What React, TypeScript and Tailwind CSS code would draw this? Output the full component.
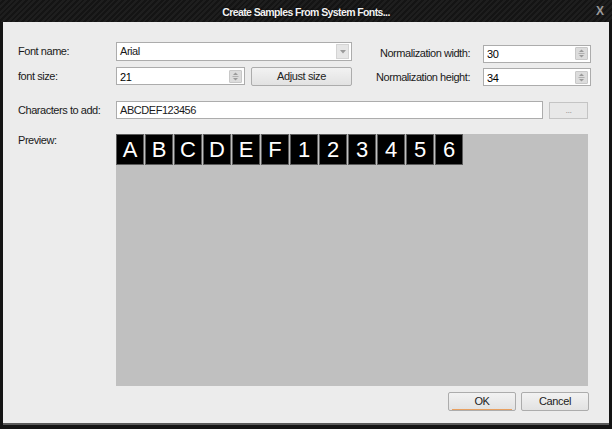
import React from 'react';

const chars = ['A', 'B', 'C', 'D', 'E', 'F', '1', '2', '3', '4', '5', '6'];

function Spin() {
  return (
    <span className="flex h-[13px] w-[13px] flex-col items-center justify-center gap-px rounded-[1px] border border-[#c8c8c8] bg-[#dcdcdc]">
      <svg width="7" height="9" viewBox="0 0 7 9">
        <path d="M3.5 0.5 L6 3 L1 3 Z" fill="#9a9a9a" />
        <rect x="0.5" y="4" width="6" height="1" fill="#b0b0b0" />
        <path d="M1 6 L6 6 L3.5 8.5 Z" fill="#9a9a9a" />
      </svg>
    </span>
  );
}

function SpinBox({ value, w }: { value: string; w: string }) {
  return (
    <div className={`flex h-[18px] items-center justify-between border border-[#acacac] bg-white pl-[3px] pr-[2px] ${w}`}>
      <span className="pt-[2px] text-[11px] leading-none text-black">{value}</span>
      <Spin />
    </div>
  );
}

function Btn({ label, w, focus }: { label: string; w: string; focus?: boolean }) {
  return (
    <button
      className={`relative flex h-[19px] items-center justify-center rounded-[2px] border border-[#acacac] bg-gradient-to-b from-[#f2f2f2] to-[#e2e2e2] text-[11px] leading-none tracking-[-0.4px] text-[#222] ${w}`}
    >
      {label}
      {focus && <span className="absolute bottom-0 left-[3px] right-[3px] h-px bg-[#e8a060]" />}
    </button>
  );
}

export default function App() {
  return (
    <div className="flex h-[429px] w-[612px] flex-col bg-[#141414] font-['Liberation_Sans',Arial,sans-serif]">
      {/* Title bar */}
      <div className="relative flex h-[22px] items-center justify-center bg-[repeating-linear-gradient(135deg,#1e1e1e_0px,#1e1e1e_2px,#141414_2px,#141414_4px)]">
        <span className="pt-[3px] text-[10.5px] font-bold tracking-[-0.6px] text-[#f2f2f2] [text-shadow:0_0_2px_#000]">
          Create Samples From System Fonts...
        </span>
        <span className="absolute right-[8px] top-[5px] text-[12px] font-bold leading-none text-[#9a9a9a]">X</span>
      </div>

      {/* Body */}
      <div className="mx-[3px] flex h-[403px] flex-col border-b-2 border-b-[#5a5a5a] bg-[#ececec] pl-[15px] pr-[18px] text-[11px] tracking-[-0.45px] text-[#1a1a1a]">
        {/* Top fields */}
        <div className="flex">
          <div className="flex flex-col pt-[20px]">
            <div className="flex h-[19px] items-center">
              <span className="w-[98px]">Font name:</span>
              <div className="flex h-[19px] w-[236px] items-center justify-between border border-[#acacac] bg-white pl-[3px] pr-[2px]">
                <span className="leading-none">Arial</span>
                <span className="flex h-[15px] w-[13px] items-center justify-center border border-[#d4d4d4] bg-[#e6e6e6]">
                  <svg width="6" height="4" viewBox="0 0 6 4">
                    <path d="M0 0 L6 0 L3 3.5 Z" fill="#9a9a9a" />
                  </svg>
                </span>
              </div>
            </div>
            <div className="mt-[6px] flex h-[18px] items-center">
              <span className="w-[98px]">font size:</span>
              <SpinBox value="21" w="w-[129px]" />
              <div className="ml-[6px]">
                <Btn label="Adjust size" w="w-[101px]" />
              </div>
            </div>
          </div>

          <div className="ml-auto flex flex-col items-end pt-[23px]">
            <div className="flex h-[17px] items-center">
              <span className="mr-[13px]">Normalization width:</span>
              <SpinBox value="30" w="w-[108px]" />
            </div>
            <div className="mt-[6px] flex h-[18px] items-center">
              <span className="mr-[13px]">Normalization height:</span>
              <SpinBox value="34" w="w-[108px]" />
            </div>
          </div>
        </div>

        {/* Characters to add */}
        <div className="mt-[15px] flex h-[18px] items-center">
          <span className="w-[98px]">Characters to add:</span>
          <div className="flex h-[18px] w-[427px] items-center border border-[#acacac] bg-white pl-[3px]">
            <span className="leading-none">ABCDEF123456</span>
          </div>
          <div className="ml-[6px]">
            <button className="flex h-[17px] w-[39px] items-center justify-center border border-[#c4c4c4] bg-[#e8e8e8] text-[9px] leading-none text-[#9a9a9a]">
              ...
            </button>
          </div>
        </div>

        {/* Preview */}
        <div className="mt-[15px] flex">
          <span className="w-[98px] pt-[1px] leading-[11px]">Preview:</span>
          <div className="h-[252px] w-[472px] bg-[#c0c0c0]">
            <div className="flex gap-px">
              {chars.map((c) => (
                <div
                  key={c}
                  className="flex h-[31px] w-[28px] items-center justify-center border border-[#5c5c5c] bg-black text-[22px] leading-none tracking-normal text-white"
                >
                  {c}
                </div>
              ))}
            </div>
          </div>
        </div>

        {/* Buttons */}
        <div className="mt-[6px] flex justify-end gap-[5px] pr-[2px]">
          <Btn label="OK" w="w-[68px]" focus />
          <Btn label="Cancel" w="w-[68px]" />
        </div>
      </div>
    </div>
  );
}
